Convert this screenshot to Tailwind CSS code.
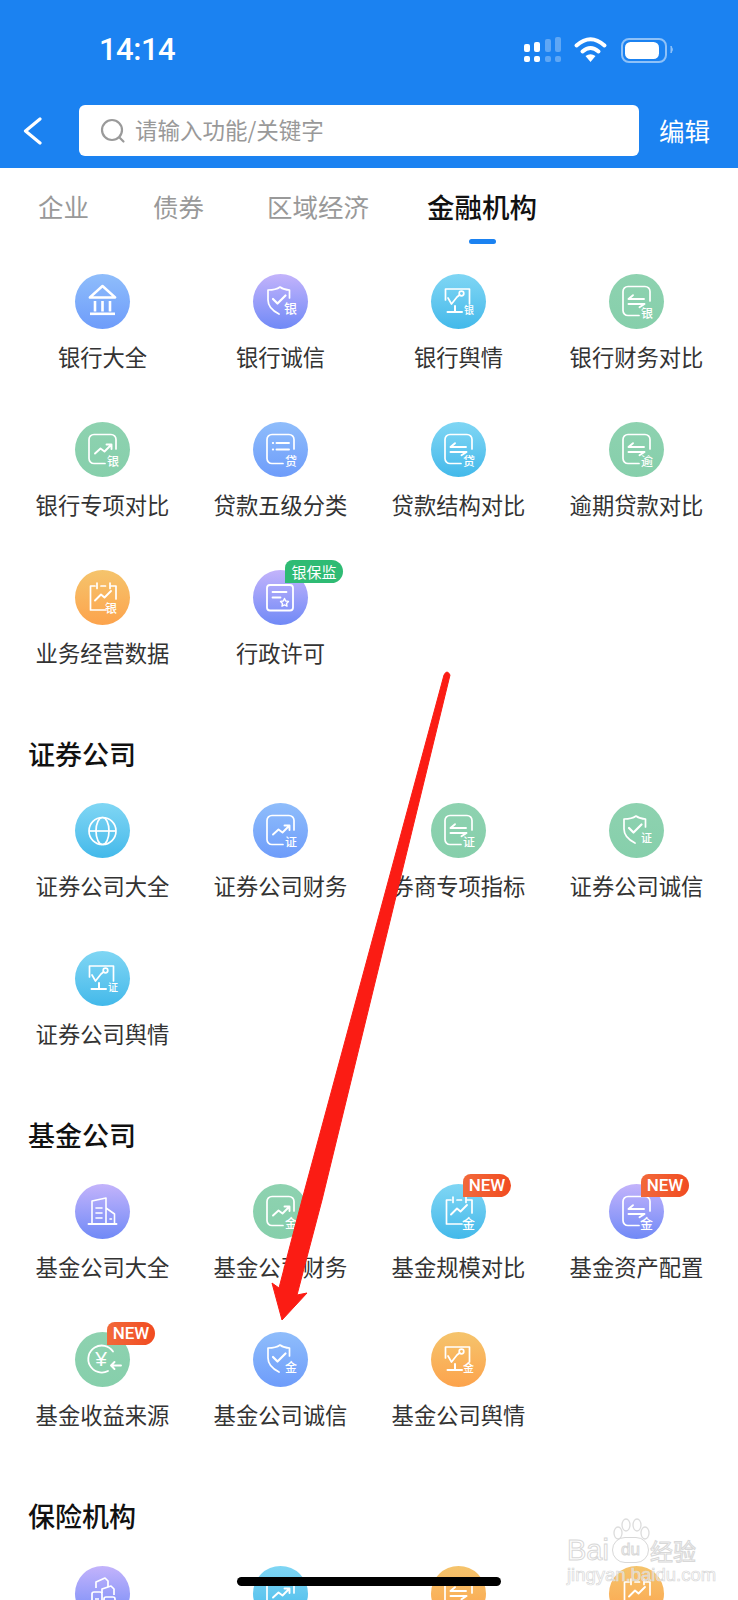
<!DOCTYPE html>
<html lang="zh">
<head>
<meta charset="utf-8">
<title>金融机构</title>
<script src="https://cdn.jsdelivr.net/npm/@tailwindcss/browser@4"></script>
</head>
<body class="bg-white">
<svg class="hidden" width="0" height="0">
  <defs>
    <symbol id="bank" viewBox="0 0 55 55"><g fill="none" stroke="#fff" stroke-width="2.400" stroke-linejoin="round"><path d="M14.800 23.500 27.500 12 40.200 23.500Z"/><path d="M20 27v10.500M27.500 27v10.500M35 27v10.500" stroke-width="2.600"/><path d="M15 39.800h25" stroke-width="2.600"/></g></symbol>
    <symbol id="shield" viewBox="0 0 55 55"><g fill="none" stroke="#fff" stroke-width="1.700" stroke-linecap="round" stroke-linejoin="round"><path d="M36.500 24V16c-4 0-6.500-.8-9.500-3-3 2.200-7 3-12 3v10c0 6.500 5 11 11 14"/><path d="M20 25l4.500 4.500 8-8" stroke-width="2.200"/></g></symbol>
    <symbol id="screen" viewBox="0 0 55 55"><g fill="none" stroke="#fff" stroke-width="1.700" stroke-linecap="round" stroke-linejoin="round"><path d="M14.500 26V15h24v15"/><path d="M17 24l3.500 6 5.500-7 2.500-2"/><circle cx="30.500" cy="19.500" r="2.300"/><path d="M16.500 38H31M24 32v6" stroke-width="2"/></g></symbol>
    <symbol id="arrows" viewBox="0 0 55 55"><g fill="none" stroke="#fff" stroke-width="1.700" stroke-linecap="round" stroke-linejoin="round"><path d="M41 27v-9.500a5 5 0 0 0-5-5H19a5 5 0 0 0-5 5v19a5 5 0 0 0 5 5h11"/><path d="M19.500 25H35M19.500 25l4.500-3.800M19.500 30H35.500M35.500 30l-5 3.300" stroke-width="1.900"/></g></symbol>
    <symbol id="trend" viewBox="0 0 55 55"><g fill="none" stroke="#fff" stroke-width="1.700" stroke-linecap="round" stroke-linejoin="round"><path d="M41 27v-9.500a5 5 0 0 0-5-5H19a5 5 0 0 0-5 5v19a5 5 0 0 0 5 5h11"/><path d="M20 31.500l5.500-5 4 3 6.500-6.500M31.500 22.500H36.500V27" stroke-width="1.900"/></g></symbol>
    <symbol id="list" viewBox="0 0 55 55"><g fill="none" stroke="#fff" stroke-width="1.700" stroke-linecap="round" stroke-linejoin="round"><path d="M41 27v-9.500a5 5 0 0 0-5-5H19a5 5 0 0 0-5 5v19a5 5 0 0 0 5 5h11"/><path d="M23.500 21H36M23.500 27.500H36M19.800 21h.4M19.800 27.500h.4" stroke-width="1.900"/></g></symbol>
    <symbol id="calendar" viewBox="0 0 55 55"><g fill="none" stroke="#fff" stroke-width="1.700" stroke-linecap="round" stroke-linejoin="round"><path d="M20 16h-4.500v24H31M36 16h5v13"/><path d="M22 13v5.500M35 13v5.500M26 16h4.500"/><path d="M20 30.500l6-6 3.500 3 6.500-6.500" stroke-width="1.900"/></g></symbol>
    <symbol id="cert" viewBox="0 0 55 55"><g fill="none" stroke="#fff" stroke-width="1.800" stroke-linecap="round" stroke-linejoin="round"><rect x="14" y="15" width="26" height="25.500" rx="3"/><path d="M19.500 22h14M19.500 27.500h8"/><path d="M31.500 28.500l1.200 2.500 2.800.4-2 2 .5 2.800-2.500-1.300-2.500 1.300.5-2.800-2-2 2.800-.4Z" stroke-width="1.400"/></g></symbol>
    <symbol id="globe" viewBox="0 0 55 55"><g fill="none" stroke="#fff" stroke-width="1.700"><circle cx="27.500" cy="28" r="13.500"/><ellipse cx="27.500" cy="28" rx="6.500" ry="13.500"/><path d="M14 28h27"/></g></symbol>
    <symbol id="building" viewBox="0 0 55 55"><g fill="none" stroke="#fff" stroke-width="1.600" stroke-linecap="round" stroke-linejoin="round"><path d="M13.500 40h28" stroke-width="1.900"/><path d="M17 40V17l14-3v26M31 24l8.500 6v10"/><path d="M21 24h6M21 29h6M21 34h6M35 35h1.500"/></g></symbol>
    <symbol id="yuan" viewBox="0 0 55 55"><g fill="none" stroke="#fff" stroke-width="1.800" stroke-linecap="round" stroke-linejoin="round"><path d="M38 19.500A13.500 13.500 0 1 0 33 39"/><path d="M36 33.500h10M36 33.500l3.500-3.500M36 33.500l3.500 3.500" stroke-width="1.900"/></g></symbol>
    <symbol id="stack" viewBox="0 0 55 55"><g fill="none" stroke="#fff" stroke-width="1.700" stroke-linejoin="round"><path d="M21 22v-6l9-4 3 3v7M27 27v-4l9-3 3 3v6"/><rect x="17" y="26" width="10" height="18" rx="2"/><rect x="29" y="31" width="11" height="13" rx="2"/><path d="M20 33h4M32 36h5"/></g></symbol>
  </defs>
</svg>

<div class="relative w-[738px] h-[1600px] overflow-hidden bg-white text-[#333] font-['Noto_Sans_CJK_SC','Noto_Sans',sans-serif]">

  <header class="h-[168px] bg-[#1b82f1] text-white">
    <div class="relative h-[100px]">
      <span class="absolute left-[99px] top-[32px] text-[31px] tracking-[-0.5px] leading-[36px] font-medium font-['Roboto',sans-serif]">14:14</span>
      <svg class="absolute left-[520px] top-[30px]" width="160" height="40" viewBox="520 30 160 40">
        <g fill="#fff"><rect x="524" y="56" width="6" height="6" rx="2"/><rect x="534" y="56" width="6" height="6" rx="2"/><rect x="524" y="44" width="6" height="8" rx="2"/><rect x="534" y="42" width="6" height="10" rx="2"/></g>
        <g fill="#fff" fill-opacity=".3"><rect x="545" y="56" width="6" height="6" rx="2"/><rect x="555" y="56" width="6" height="6" rx="2"/><rect x="545" y="39" width="6" height="13" rx="2"/><rect x="555" y="37" width="6" height="15" rx="2"/></g>
        <g fill="none" stroke="#fff" stroke-width="4" stroke-linecap="round"><path d="M576.500 45.500Q590.500 33 604.500 45.500"/><path d="M582.500 51.500Q590.500 44.500 598.500 51.500"/></g>
        <path d="M590.500 62l-5-6q5-3.500 10 0Z" fill="#fff"/>
        <rect x="622" y="39" width="44" height="23" rx="7" fill="none" stroke="#8ec1f8" stroke-width="2"/>
        <rect x="625" y="42" width="34" height="17" rx="5.500" fill="#fff"/>
        <path d="M671 46q3 3.500 0 7Z" fill="#8ec1f8" stroke="#8ec1f8"/>
      </svg>
    </div>
    <div class="flex items-start pt-[5px] h-[68px]">
      <svg class="ml-[23px] mt-[12px] shrink-0" width="22" height="28" viewBox="0 0 22 28" fill="none" stroke="#fff" stroke-width="3.200" stroke-linecap="round" stroke-linejoin="round"><path d="M17 2 2.500 14 17 26"/></svg>
      <div class="ml-[34px] w-[560px] h-[51px] rounded-[6px] bg-white flex items-center">
        <svg class="ml-[21px] shrink-0" width="26" height="26" viewBox="0 0 26 26" fill="none" stroke="#9a9a9a" stroke-width="2.200" stroke-linecap="round"><circle cx="12" cy="12" r="10"/><path d="M20 20l3.500 3.500"/></svg>
        <span class="ml-[9px] -mt-[4px] text-[22.500px] leading-[30px] text-[#999]">请输入功能/关键字</span>
      </div>
      <span class="ml-[20px] text-[25.500px] leading-[50px] whitespace-nowrap">编辑</span>
    </div>
  </header>

  <nav class="relative h-[82px] pl-[38px] pt-[18px] flex items-start text-[25.500px] leading-[40px] text-[#999]">
    <span>企业</span>
    <span class="ml-[64px]">债券</span>
    <span class="ml-[63px]">区域经济</span>
    <span class="ml-[58px] text-[27.500px] font-medium text-[#111]">金融机构</span>
    <span class="absolute left-[469px] top-[71px] w-[27px] h-[5px] rounded-full bg-[#1b82f1]"></span>
  </nav>

  <main>
    <section class="mt-[24px] pl-[13.500px] grid grid-cols-[repeat(4,178px)] auto-rows-[148px] text-[22.300px] leading-[30px]">
      <div class="flex flex-col items-center"><div class="relative size-[55px] rounded-full bg-linear-to-b from-[#8fbdfb] to-[#6e9cfa]"><svg class="absolute inset-0 size-full"><use href="#bank"/></svg></div><p class="mt-[12px] whitespace-nowrap">银行大全</p></div>
      <div class="flex flex-col items-center"><div class="relative size-[55px] rounded-full bg-linear-to-b from-[#c3b3fb] to-[#7089f6]"><svg class="absolute inset-0 size-full"><use href="#shield"/></svg><span class="absolute left-[31px] top-[26px] text-[13px] leading-[15px] font-medium text-white">银</span></div><p class="mt-[12px] whitespace-nowrap">银行诚信</p></div>
      <div class="flex flex-col items-center"><div class="relative size-[55px] rounded-full bg-linear-to-b from-[#7fd6f4] to-[#42b9ea]"><svg class="absolute inset-0 size-full"><use href="#screen"/></svg><span class="absolute left-[33px] top-[30px] text-[10px] leading-[12px] font-medium text-white">银</span></div><p class="mt-[12px] whitespace-nowrap">银行舆情</p></div>
      <div class="flex flex-col items-center"><div class="relative size-[55px] rounded-full bg-linear-to-b from-[#8ed2b0] to-[#86cfab]"><svg class="absolute inset-0 size-full"><use href="#arrows"/></svg><span class="absolute left-[32px] top-[32px] text-[12px] leading-[14px] font-medium text-white">银</span></div><p class="mt-[12px] whitespace-nowrap">银行财务对比</p></div>

      <div class="flex flex-col items-center"><div class="relative size-[55px] rounded-full bg-linear-to-b from-[#8ed2b0] to-[#86cfab]"><svg class="absolute inset-0 size-full"><use href="#trend"/></svg><span class="absolute left-[32px] top-[32px] text-[12px] leading-[14px] font-medium text-white">银</span></div><p class="mt-[12px] whitespace-nowrap">银行专项对比</p></div>
      <div class="flex flex-col items-center"><div class="relative size-[55px] rounded-full bg-linear-to-b from-[#8fbdfb] to-[#6e9cfa]"><svg class="absolute inset-0 size-full"><use href="#list"/></svg><span class="absolute left-[32px] top-[32px] text-[12px] leading-[14px] font-medium text-white">贷</span></div><p class="mt-[12px] whitespace-nowrap">贷款五级分类</p></div>
      <div class="flex flex-col items-center"><div class="relative size-[55px] rounded-full bg-linear-to-b from-[#7fd6f4] to-[#42b9ea]"><svg class="absolute inset-0 size-full"><use href="#arrows"/></svg><span class="absolute left-[32px] top-[32px] text-[12px] leading-[14px] font-medium text-white">贷</span></div><p class="mt-[12px] whitespace-nowrap">贷款结构对比</p></div>
      <div class="flex flex-col items-center"><div class="relative size-[55px] rounded-full bg-linear-to-b from-[#8ed2b0] to-[#86cfab]"><svg class="absolute inset-0 size-full"><use href="#arrows"/></svg><span class="absolute left-[32px] top-[32px] text-[12px] leading-[14px] font-medium text-white">逾</span></div><p class="mt-[12px] whitespace-nowrap">逾期贷款对比</p></div>

      <div class="flex flex-col items-center"><div class="relative size-[55px] rounded-full bg-linear-to-b from-[#f5c46c] to-[#fca34c]"><svg class="absolute inset-0 size-full"><use href="#calendar"/></svg><span class="absolute left-[30px] top-[31px] text-[12px] leading-[14px] font-medium text-white">银</span></div><p class="mt-[12px] whitespace-nowrap">业务经营数据</p></div>
      <div class="flex flex-col items-center"><div class="relative size-[55px] rounded-full bg-linear-to-b from-[#c3b3fb] to-[#7089f6]"><svg class="absolute inset-0 size-full"><use href="#cert"/></svg><span class="absolute left-[32px] top-[-10px] w-[58px] h-[23px] rounded-tl-[8px] rounded-r-[12px] bg-[#2fbb74] text-white text-[15px] leading-[23px] text-center whitespace-nowrap">银保监</span></div><p class="mt-[12px] whitespace-nowrap">行政许可</p></div>
    </section>

    <h2 class="mt-[16px] mb-[29px] pl-[28px] h-[40px] text-[27px] leading-[40px] font-medium text-[#111]">证券公司</h2>
    <section class="pl-[13.500px] grid grid-cols-[repeat(4,178px)] auto-rows-[148px] text-[22.300px] leading-[30px]">
      <div class="flex flex-col items-center"><div class="relative size-[55px] rounded-full bg-linear-to-b from-[#7fd6f4] to-[#42b9ea]"><svg class="absolute inset-0 size-full"><use href="#globe"/></svg></div><p class="mt-[12px] whitespace-nowrap">证券公司大全</p></div>
      <div class="flex flex-col items-center"><div class="relative size-[55px] rounded-full bg-linear-to-b from-[#8fbdfb] to-[#6e9cfa]"><svg class="absolute inset-0 size-full"><use href="#trend"/></svg><span class="absolute left-[32px] top-[32px] text-[12px] leading-[14px] font-medium text-white">证</span></div><p class="mt-[12px] whitespace-nowrap">证券公司财务</p></div>
      <div class="flex flex-col items-center"><div class="relative size-[55px] rounded-full bg-linear-to-b from-[#8ed2b0] to-[#86cfab]"><svg class="absolute inset-0 size-full"><use href="#arrows"/></svg><span class="absolute left-[32px] top-[32px] text-[12px] leading-[14px] font-medium text-white">证</span></div><p class="mt-[12px] whitespace-nowrap">券商专项指标</p></div>
      <div class="flex flex-col items-center"><div class="relative size-[55px] rounded-full bg-linear-to-b from-[#8ed2b0] to-[#86cfab]"><svg class="absolute inset-0 size-full"><use href="#shield"/></svg><span class="absolute left-[32px] top-[28px] text-[11px] leading-[13px] font-medium text-white">证</span></div><p class="mt-[12px] whitespace-nowrap">证券公司诚信</p></div>

      <div class="flex flex-col items-center"><div class="relative size-[55px] rounded-full bg-linear-to-b from-[#7fd6f4] to-[#42b9ea]"><svg class="absolute inset-0 size-full"><use href="#screen"/></svg><span class="absolute left-[33px] top-[30px] text-[10px] leading-[12px] font-medium text-white">证</span></div><p class="mt-[12px] whitespace-nowrap">证券公司舆情</p></div>
    </section>

    <h2 class="mt-[16px] mb-[29px] pl-[28px] h-[40px] text-[27px] leading-[40px] font-medium text-[#111]">基金公司</h2>
    <section class="pl-[13.500px] grid grid-cols-[repeat(4,178px)] auto-rows-[148px] text-[22.300px] leading-[30px]">
      <div class="flex flex-col items-center"><div class="relative size-[55px] rounded-full bg-linear-to-b from-[#c3b3fb] to-[#7089f6]"><svg class="absolute inset-0 size-full"><use href="#building"/></svg></div><p class="mt-[12px] whitespace-nowrap">基金公司大全</p></div>
      <div class="flex flex-col items-center"><div class="relative size-[55px] rounded-full bg-linear-to-b from-[#8ed2b0] to-[#86cfab]"><svg class="absolute inset-0 size-full"><use href="#trend"/></svg><span class="absolute left-[32px] top-[32px] text-[12px] leading-[14px] font-medium text-white">金</span></div><p class="mt-[12px] whitespace-nowrap">基金公司财务</p></div>
      <div class="flex flex-col items-center"><div class="relative size-[55px] rounded-full bg-linear-to-b from-[#7fd6f4] to-[#42b9ea]"><svg class="absolute inset-0 size-full"><use href="#calendar"/></svg><span class="absolute left-[31px] top-[31px] text-[13px] leading-[15px] font-medium text-white">金</span><span class="absolute left-[32px] top-[-10px] w-[48px] h-[23px] rounded-tl-[8px] rounded-r-[12px] bg-linear-to-r from-[#f2693a] to-[#f14b20] text-white text-[17px] leading-[23px] text-center font-medium font-['Roboto',sans-serif]">NEW</span></div><p class="mt-[12px] whitespace-nowrap">基金规模对比</p></div>
      <div class="flex flex-col items-center"><div class="relative size-[55px] rounded-full bg-linear-to-b from-[#c3b3fb] to-[#7089f6]"><svg class="absolute inset-0 size-full"><use href="#arrows"/></svg><span class="absolute left-[31px] top-[31px] text-[13px] leading-[15px] font-medium text-white">金</span><span class="absolute left-[32px] top-[-10px] w-[48px] h-[23px] rounded-tl-[8px] rounded-r-[12px] bg-linear-to-r from-[#f2693a] to-[#f14b20] text-white text-[17px] leading-[23px] text-center font-medium font-['Roboto',sans-serif]">NEW</span></div><p class="mt-[12px] whitespace-nowrap">基金资产配置</p></div>

      <div class="flex flex-col items-center"><div class="relative size-[55px] rounded-full bg-linear-to-b from-[#8ed2b0] to-[#86cfab]"><svg class="absolute inset-0 size-full"><use href="#yuan"/></svg><span class="absolute left-[17px] top-[15px] w-[18px] text-center text-[21px] leading-[24px] font-medium text-white font-['Liberation_Sans',sans-serif]">¥</span><span class="absolute left-[32px] top-[-10px] w-[48px] h-[23px] rounded-tl-[8px] rounded-r-[12px] bg-linear-to-r from-[#f2693a] to-[#f14b20] text-white text-[17px] leading-[23px] text-center font-medium font-['Roboto',sans-serif]">NEW</span></div><p class="mt-[12px] whitespace-nowrap">基金收益来源</p></div>
      <div class="flex flex-col items-center"><div class="relative size-[55px] rounded-full bg-linear-to-b from-[#8fbdfb] to-[#6e9cfa]"><svg class="absolute inset-0 size-full"><use href="#shield"/></svg><span class="absolute left-[32px] top-[28px] text-[12px] leading-[14px] font-medium text-white">金</span></div><p class="mt-[12px] whitespace-nowrap">基金公司诚信</p></div>
      <div class="flex flex-col items-center"><div class="relative size-[55px] rounded-full bg-linear-to-b from-[#f5c46c] to-[#fca34c]"><svg class="absolute inset-0 size-full"><use href="#screen"/></svg><span class="absolute left-[32px] top-[29px] text-[11px] leading-[13px] font-medium text-white">金</span></div><p class="mt-[12px] whitespace-nowrap">基金公司舆情</p></div>
    </section>

    <h2 class="mt-[16px] mb-[30px] pl-[28px] h-[40px] text-[27px] leading-[40px] font-medium text-[#111]">保险机构</h2>
    <section class="pl-[13.500px] grid grid-cols-[repeat(4,178px)] auto-rows-[148px]">
      <div class="flex flex-col items-center"><div class="relative size-[55px] rounded-full bg-linear-to-b from-[#c3b3fb] to-[#7089f6]"><svg class="absolute inset-0 size-full"><use href="#stack"/></svg></div></div>
      <div class="flex flex-col items-center"><div class="relative size-[55px] rounded-full bg-linear-to-b from-[#7fd6f4] to-[#42b9ea]"><svg class="absolute inset-0 size-full"><use href="#trend"/></svg></div></div>
      <div class="flex flex-col items-center"><div class="relative size-[55px] rounded-full bg-linear-to-b from-[#f5c46c] to-[#fca34c]"><svg class="absolute inset-0 size-full"><use href="#arrows"/></svg></div></div>
      <div class="flex flex-col items-center"><div class="relative size-[55px] rounded-full bg-linear-to-b from-[#f5c46c] to-[#fca34c]"><svg class="absolute inset-0 size-full"><use href="#calendar"/></svg></div></div>
    </section>
  </main>

  <!-- watermark -->
  <div class="absolute left-[567px] top-[1518px] w-[132px] h-[66px]">
    <svg class="absolute left-[44px] top-0" width="42" height="28" viewBox="0 0 42 28" fill="none" stroke="#dcdcdc" stroke-width="1.300"><ellipse cx="7" cy="15" rx="4" ry="6"/><ellipse cx="15" cy="7" rx="4" ry="6"/><ellipse cx="26" cy="7" rx="4" ry="6"/><ellipse cx="34" cy="15" rx="4" ry="6"/></svg>
    <div class="absolute left-0 top-[18px] h-[28px] flex items-center whitespace-nowrap font-['Liberation_Sans',sans-serif] text-[29px] leading-[28px] text-white/60 [-webkit-text-stroke:1px_#d8d8d8]">
      <span>Bai</span><span class="ml-[3px] w-[37px] text-center text-[17px] rounded-full border border-[#d8d8d8] leading-[24px]">du</span><span class="ml-[1px] text-[23px] leading-[28px] font-['Noto_Sans_CJK_SC',sans-serif]">经验</span>
    </div>
    <div class="absolute left-0 top-[48px] text-[18.500px] leading-[18px] whitespace-nowrap font-['Liberation_Sans',sans-serif] text-white/50 [-webkit-text-stroke:0.7px_#d8d8d8]">jingyan.baidu.com</div>
  </div>

  <!-- red annotation arrow -->
  <svg class="absolute inset-0 pointer-events-none" width="738" height="1600" viewBox="0 0 738 1600">
    <path d="M444 675Q447 669 450 675L322 1200 297 1295 307 1293 282 1320 272 1283 279 1288 302 1200Z" fill="#fb1c14" stroke="#fb1c14" stroke-width="1" stroke-linejoin="round"/>
  </svg>

  <!-- home indicator -->
  <div class="absolute left-[237px] top-[1577px] w-[264px] h-[9px] rounded-full bg-black"></div>
</div>
</body>
</html>
